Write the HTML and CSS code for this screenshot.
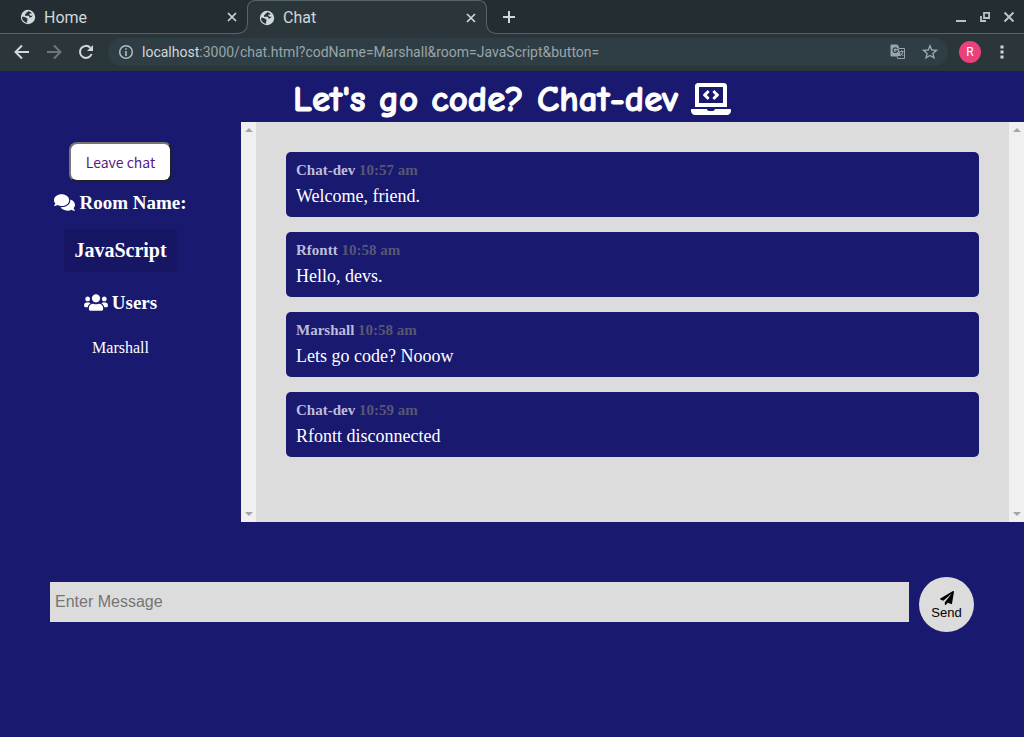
FILE: index.html
```html
<!DOCTYPE html>
<html lang="en">
<head>
<meta charset="utf-8">
<meta name="viewport" content="width=device-width, initial-scale=1">
<title>Chat</title>
<link rel="stylesheet" href="styles.css">
</head>
<body>
<svg class="sprite" aria-hidden="true">
  <symbol id="globe" viewBox="0 0 16 16">
    <circle cx="8" cy="8" r="7.2" fill="#cfd8dc"/>
    <path d="M9.400 2.300Q9.200 3.800 7.400 4Q7.400 5.500 5.800 5.700V7.200H9.600Q10.400 7.400 10.400 9.200H11.600Q13.400 8.600 13.800 6.400Q12.800 3.300 9.400 2.300Z" fill="#263238" transform="translate(-0.500 -0.200) scale(0.950)"/>
    <path d="M2.200 7.400L5.200 8.200L7.400 9.600V11.400Q6.300 12.300 7.400 13.900Q4.500 13.600 2.900 11.200Q1.900 9.500 2.200 7.400Z" fill="#263238"/>
    <path d="M9.600 4.400H13V6.200L11 7 9.200 5.800Z" fill="#cfd8dc"/>
  </symbol>
  <symbol id="close" viewBox="0 0 10 10"><path d="M1 1 9 9M9 1 1 9" fill="none" stroke="currentColor" stroke-width="1.7"/></symbol>
</svg>

<header class="browser">
  <div class="tabstrip">
    <div class="tab">
      <svg class="favicon"><use href="#globe"/></svg>
      <span class="tab-title">Home</span>
      <button class="tab-close" aria-label="Close Home"><svg><use href="#close"/></svg></button>
    </div>
    <div class="tab tab-active">
      <svg class="favicon"><use href="#globe"/></svg>
      <span class="tab-title">Chat</span>
      <button class="tab-close" aria-label="Close Chat"><svg><use href="#close"/></svg></button>
    </div>
    <button class="new-tab" aria-label="New tab"><svg viewBox="0 0 12 12"><path d="M6 0V12M0 6H12" stroke="currentColor" stroke-width="2"/></svg></button>
    <div class="window-controls">
      <button aria-label="Minimize"><svg viewBox="0 0 12 12"><path d="M1 10H11" stroke="currentColor" stroke-width="2"/></svg></button>
      <button aria-label="Restore"><svg viewBox="0 0 12 12"><path d="M5 1.900H10.100V7H5ZM2 5V10H7" fill="none" stroke="currentColor" stroke-width="1.800"/></svg></button>
      <button aria-label="Close window"><svg viewBox="0 0 12 12"><path d="M1.500 1.500 10.500 10.500M10.500 1.500 1.500 10.500" stroke="currentColor" stroke-width="2"/></svg></button>
    </div>
  </div>
  <div class="toolbar">
    <button class="nav" aria-label="Back"><svg viewBox="0 0 16 16"><path d="M15 8H2M8 1.500 1.500 8 8 14.500" fill="none" stroke="currentColor" stroke-width="2"/></svg></button>
    <button class="nav nav-off" aria-label="Forward"><svg viewBox="0 0 16 16"><path d="M1 8H14M8 1.500 14.500 8 8 14.500" fill="none" stroke="currentColor" stroke-width="2"/></svg></button>
    <button class="nav" aria-label="Reload"><svg viewBox="0 0 16 16"><path d="M13.600 10A6 6 0 1 1 12.300 3.700" fill="none" stroke="currentColor" stroke-width="2"/><path d="M15 1V7H9Z" fill="currentColor"/></svg></button>
    <div class="omnibox">
      <svg class="info" viewBox="0 0 16 16"><circle cx="8" cy="8" r="6.300" fill="none" stroke="currentColor" stroke-width="1.500"/><path d="M8 7V12M8 4.200V5.800" stroke="currentColor" stroke-width="1.600"/></svg>
      <span class="url"><b>localhost</b>:3000/chat.html?codName=Marshall&amp;room=JavaScript&amp;button=</span>
      <button class="tool" aria-label="Translate this page"><svg viewBox="0 0 16 16"><path d="M1 1H7.500L9 4.500H14.500V14.500H7.800L7 12H1Z" fill="none" stroke="currentColor"/><path d="M1 1H7.500L10.800 12H1Z" fill="currentColor"/><path d="M7.300 5A2.300 2.300 0 1 0 7.500 7H5.400" fill="none" stroke="#2f3d44" stroke-width="1.200"/><path d="M9.500 7.500H13.500M11.500 6.500V7.500M13 7.500C12.500 9.500 11.500 11 10 12M10.500 9 13.300 12" fill="none" stroke="currentColor"/></svg></button>
      <button class="tool" aria-label="Bookmark this page"><svg viewBox="0 0 16 16"><path d="M8 1.800 9.800 6 14.400 6.400 10.900 9.400 12 13.900 8 11.500 4 13.900 5.100 9.400 1.600 6.400 6.200 6Z" fill="none" stroke="currentColor" stroke-width="1.400"/></svg></button>
    </div>
    <button class="avatar" aria-label="Profile R">R</button>
    <button class="menu" aria-label="Menu"><svg viewBox="0 0 4 16"><path d="M0.500 1.500H3.500V4.500H0.500ZM0.500 6.500H3.500V9.500H0.500ZM0.500 11.500H3.500V14.500H0.500Z" fill="currentColor"/></svg></button>
  </div>
</header>

<main class="page">
  <h1 class="title">Let's go code? Chat-dev
    <svg class="title-icon" viewBox="0 0 640 512" aria-hidden="true"><path fill="currentColor" d="M255.03 261.65c6.25 6.25 16.38 6.25 22.63 0l11.31-11.31c6.25-6.25 6.25-16.38 0-22.63L253.25 192l35.71-35.72c6.25-6.25 6.25-16.38 0-22.63l-11.31-11.31c-6.25-6.25-16.38-6.25-22.63 0l-58.34 58.34c-6.25 6.25-6.25 16.38 0 22.63l58.35 58.34zm96.01-11.3l11.31 11.31c6.25 6.25 16.38 6.25 22.63 0l58.34-58.34c6.25-6.25 6.25-16.38 0-22.63l-58.34-58.34c-6.25-6.25-16.38-6.25-22.63 0l-11.31 11.31c-6.25 6.25-6.25 16.38 0 22.63L386.75 192l-35.71 35.72c-6.25 6.25-6.25 16.38 0 22.63zM624 416H381.54c-.74 19.81-14.71 32-32.74 32H288c-18.69 0-33.02-17.47-32.77-32H16c-8.8 0-16 7.2-16 16v16c0 35.2 28.8 64 64 64h512c35.2 0 64-28.8 64-64v-16c0-8.8-7.2-16-16-16zM576 48c0-26.400-21.600-48-48-48H112C85.600 0 64 21.600 64 48v336h512V48zm-64 272H128V64h384v256z"/></svg>
  </h1>

  <div class="chat">
    <aside class="sidebar">
      <div class="sidebar-body">
        <a class="leave" href="index.html">Leave chat</a>
        <h3 class="label"><svg class="icon-comments" viewBox="0 0 576 512" aria-hidden="true"><path fill="currentColor" d="M416 192c0-88.400-93.100-160-208-160S0 103.600 0 192c0 34.300 14.100 65.900 38 92-13.400 30.200-35.500 54.200-35.800 54.500-2.200 2.300-2.800 5.700-1.500 8.700S4.800 352 8 352c36.600 0 66.900-12.300 88.700-25 32.200 15.700 70.300 25 111.300 25 114.900 0 208-71.600 208-160zm122 220c23.900-26 38-57.700 38-92 0-66.900-53.500-124.200-129.300-148.100.9 6.600 1.300 13.300 1.300 20.100 0 105.900-107.700 192-240 192-10.800 0-21.300-.8-31.700-1.900C207.800 439.600 281.800 480 368 480c41 0 79.100-9.200 111.300-25 21.800 12.700 52.100 25 88.700 25 3.200 0 6.100-1.900 7.300-4.800 1.300-2.900.7-6.300-1.500-8.700-.3-.3-22.400-24.200-35.800-54.500z"/></svg>Room Name:</h3>
        <h2 class="room">JavaScript</h2>
        <h3 class="label"><svg class="icon-users" viewBox="0 0 640 512" aria-hidden="true"><path fill="currentColor" d="M96 224c35.300 0 64-28.700 64-64s-28.700-64-64-64-64 28.700-64 64 28.700 64 64 64zm448 0c35.300 0 64-28.700 64-64s-28.700-64-64-64-64 28.700-64 64 28.700 64 64 64zm32 32h-64c-17.600 0-33.500 7.100-45.100 18.600 40.300 22.100 68.900 62 75.100 109.400h66c17.700 0 32-14.300 32-32v-32c0-35.300-28.700-64-64-64zm-256 0c61.900 0 112-50.100 112-112S381.900 32 320 32 208 82.100 208 144s50.100 112 112 112zm76.800 32h-8.300c-20.800 10-43.900 16-68.500 16s-47.600-6-68.500-16h-8.300C179.600 288 128 339.600 128 403.200V432c0 26.500 21.500 48 48 48h288c26.500 0 48-21.500 48-48v-28.800c0-63.600-51.600-115.200-115.200-115.200zm-223.700-13.400C161.500 263.100 145.600 256 128 256H64c-35.300 0-64 28.700-64 64v32c0 17.700 14.300 32 32 32h65.900c6.300-47.400 34.900-87.300 75.200-109.400z"/></svg>Users</h3>
        <ul class="users"><li>Marshall</li></ul>
      </div>
      <div class="track" aria-hidden="true"><i class="up"></i><i class="down"></i></div>
    </aside>

    <section class="messages">
      <div class="message-list">
        <article class="message"><p class="meta"><span>Chat-dev</span> <time>10:57 am</time></p><p class="text">Welcome, friend.</p></article>
        <article class="message"><p class="meta"><span>Rfontt</span> <time>10:58 am</time></p><p class="text">Hello, devs.</p></article>
        <article class="message"><p class="meta"><span>Marshall</span> <time>10:58 am</time></p><p class="text">Lets go code? Nooow</p></article>
        <article class="message"><p class="meta"><span>Chat-dev</span> <time>10:59 am</time></p><p class="text">Rfontt disconnected</p></article>
      </div>
      <div class="track" aria-hidden="true"><i class="up"></i><i class="down"></i></div>
    </section>
  </div>

  <form class="composer">
    <input class="entry" type="text" placeholder="Enter Message" aria-label="Enter Message">
    <button class="send" type="submit"><svg viewBox="0 0 512 512" aria-hidden="true"><path fill="currentColor" d="M476 3.200L12.500 270.600c-18.100 10.400-15.800 35.600 2.200 43.200L121 358.400l287.300-253.200c5.500-4.900 13.300 2.600 8.600 8.300L176 407v80.500c0 23.600 28.500 32.900 42.500 15.800L282 426l124.600 52.200c14.200 6 30.400-2.900 33-18.200l72-432C515 7.800 493.300-6.800 476 3.200z"/></svg>Send</button>
  </form>
</main>
</body>
</html>
```
FILE: styles.css
```css
* { box-sizing: border-box; }

body {
  margin: 0;
  min-height: 100vh;
  background: #191970;
  color: #fff;
  font-family: "Liberation Serif", "Times New Roman", serif;
}

h1, h2, h3, p, ul { margin: 0; padding: 0; }
button { border: 0; padding: 0; background: none; color: inherit; font: inherit; }
svg { display: block; }
.sprite { display: none; }

/* Browser frame */
.browser {
  color: #cfd8dc;
  background: #2b363b;
  font-family: Roboto, sans-serif;
}

.tabstrip {
  display: flex;
  height: 34px;
  background: #232d32;
  border-bottom: 1px solid #566467;
}

.tab {
  display: flex;
  align-items: center;
  flex: 0 1 240px;
  height: 34px;
  padding: 0 11px 0 12px;
}
.tab:first-child { margin-left: 8px; }

.tab-active {
  position: relative;
  margin-left: -1px;
  padding: 0 10px 0 11px;
  background: #2b363b;
  border: 1px solid #566467;
  border-bottom: 0;
  border-radius: 8px 8px 0 0;
}

/* Flared feet where the active tab meets the strip line */
.tab-active::before,
.tab-active::after {
  content: "";
  position: absolute;
  bottom: 0;
  width: 9px;
  height: 9px;
}
.tab-active::before {
  left: -9px;
  background: radial-gradient(circle at 0 0, #232d32 7px, #566467 8px, #566467 8px, #2b363b 9px);
}
.tab-active::after {
  right: -9px;
  background: radial-gradient(circle at 100% 0, #232d32 7px, #566467 8px, #566467 8px, #2b363b 9px);
}

.favicon { width: 16px; height: 16px; }
.tab-title { flex: 1; padding-left: 8px; font-size: 16px; }
.tab-close svg { width: 10px; height: 10px; }
.new-tab { margin-left: 16px; }
.new-tab svg { width: 12px; height: 12px; }

.window-controls {
  display: flex;
  align-items: center;
  gap: 12px;
  margin-left: auto;
  padding-right: 9px;
  color: #b8c4c9;
}
.window-controls svg { width: 12px; height: 12px; }

.toolbar {
  display: flex;
  align-items: center;
  height: 37px;
  padding: 0 20px 1px 14px;
}
.nav { margin-right: 16px; }
.nav svg { width: 16px; height: 16px; }
.nav-off { color: #6b777c; }

.omnibox {
  display: flex;
  align-items: center;
  flex: 1;
  min-width: 0;
  height: 28px;
  margin-left: -2px;
  padding: 0 10px;
  border-radius: 14px;
  background: #2f3d44;
  color: #9aa5a9;
}
.info { width: 16px; height: 16px; color: #b4bec2; }
.url {
  flex: 1;
  overflow: hidden;
  padding-left: 8px;
  font-size: 14px;
  line-height: 20px;
  white-space: nowrap;
}
.url b { font-weight: 400; color: #cfd8dc; }
.tool { margin-left: 16px; }
.tool svg { width: 16px; height: 16px; }

.avatar {
  width: 22px;
  height: 22px;
  margin: 0 19px 0 11px;
  border-radius: 50%;
  background: #ec407a;
  color: #fff;
  font-size: 12px;
}
.menu svg { width: 4px; height: 16px; }

/* Page heading */
.title {
  display: flex;
  align-items: center;
  justify-content: center;
  gap: 13px;
  height: 51px;
  padding-top: 4px;
  font-family: "Comic Neue", "Comic Sans MS", "Open Sans", sans-serif;
  font-size: 37px;
  font-weight: 700;
  line-height: 48px;
  -webkit-text-stroke: 1px #fff;
}
.title-icon { width: 40px; height: 32px; }

/* Room panel and conversation */
.chat {
  display: grid;
  grid-template-columns: 1fr 3fr;
  min-height: 400px;
}

.sidebar, .messages { display: flex; }

.sidebar-body {
  display: flex;
  flex: 1;
  flex-direction: column;
  align-items: center;
  padding-top: 20px;
}

.leave {
  padding: 6px 15px;
  border: 2px outset #767676;
  border-radius: 8px;
  background: #fff;
  color: #551a8b;
  font-family: "Noto Sans CJK SC", "Noto Sans", sans-serif;
  font-size: 14px;
  line-height: 24px;
  text-decoration: none;
}

.label {
  display: flex;
  align-items: center;
  gap: 4px;
  margin-top: 10px;
  font-size: 19px;
  line-height: 22px;
}
.label svg { margin-bottom: 2px; }
.icon-comments { width: 21px; height: 19px; }
.icon-users { width: 24px; height: 19px; }

.room {
  margin: 15px 0 10px;
  padding: 10px;
  background: #161664;
  font-size: 20px;
  line-height: 23px;
}

.users {
  margin-top: 24px;
  font-size: 16px;
  line-height: 20px;
  list-style: none;
}

.track {
  display: flex;
  flex-direction: column;
  align-items: center;
  justify-content: space-between;
  width: 15px;
  padding: 6px 0;
  background: #f0f0f0;
}
.up, .down {
  border: 4px solid transparent;
  border-top-width: 0;
  border-bottom-color: #a3a3a3;
}
.down { transform: rotate(180deg); }

.messages { background: #dcdcdc; }

.message-list {
  display: flex;
  flex: 1;
  flex-direction: column;
  gap: 15px;
  padding: 30px;
}

.message {
  padding: 10px;
  border-radius: 5px;
  background: #191970;
}
.meta {
  margin-bottom: 7px;
  color: #bcbcdc;
  font-size: 15px;
  font-weight: 700;
  line-height: 16px;
}
.meta time { color: #575775; }
.text { font-size: 18px; line-height: 22px; }

/* Message form */
.composer {
  display: flex;
  align-items: flex-start;
  gap: 10px;
  padding: 55px 50px;
}
.entry {
  flex: 1;
  min-width: 0;
  height: 40px;
  margin-top: 5px;
  padding: 0 5px;
  border: 0;
  border-radius: 0;
  background: #dcdcdc;
  color: #000;
  font: 16px "Liberation Sans", Arial, sans-serif;
}
.entry::placeholder { color: #757575; opacity: 1; }

.send {
  display: flex;
  flex-direction: column;
  align-items: center;
  justify-content: center;
  width: 55px;
  height: 55px;
  padding-top: 2px;
  border-radius: 50%;
  background: #dcdcdc;
  color: #000;
  font: 13px/16px "Liberation Sans", Arial, sans-serif;
}
.send svg { width: 14px; height: 14px; }
```
